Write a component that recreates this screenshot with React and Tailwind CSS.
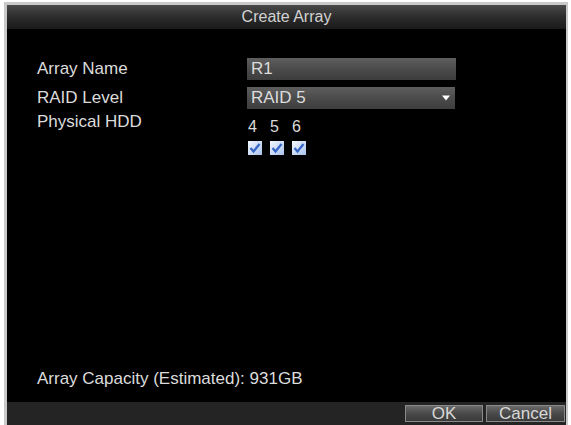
import React from 'react';

const labelCls = "text-[17px] leading-[20px] text-[#dcdcdc]";

const CheckBox = () => (
  <svg width="14" height="14" viewBox="0 0 14 14">
    <defs>
      <linearGradient id="cbg" x1="0" y1="0" x2="1" y2="1">
        <stop offset="0" stopColor="#f4f8ff" />
        <stop offset="1" stopColor="#a9c2ec" />
      </linearGradient>
    </defs>
    <rect x="0" y="0" width="14" height="14" fill="url(#cbg)" />
    <path d="M2.5 7 L5.5 10.5 L11.5 3" fill="none" stroke="#3566c6" strokeWidth="2.2" />
  </svg>
);

const App = () => {
  return (
    <div className="w-[571px] h-[425px] bg-white pt-[2px] pl-[4px] overflow-hidden font-['Liberation_Sans',Arial,sans-serif]">
      <div className="w-[564px] h-[425px] border-l-[3px] border-t-[3px] border-r-[2px] border-[#c9c9c9] bg-black flex flex-col">
        {/* title bar */}
        <div className="h-[24px] shrink-0 bg-gradient-to-b from-[#4a4a4a] via-[#2c2c2c] to-[#1a1a1a] flex items-center justify-center">
          <span className="text-[16px] leading-[20px] text-[#d2d2d2]">Create Array</span>
        </div>

        {/* body */}
        <div className="flex-1 flex flex-col pl-[30px] pt-[29px] pb-[13px]">
          <div className="flex items-center h-[22px]">
            <div className={`w-[210px] ${labelCls}`}>Array Name</div>
            <div className="w-[209px] h-[22px] bg-gradient-to-b from-[#5e5e5e] via-[#4b4b4b] to-[#3d3d3d] pl-[4px] flex items-center">
              <span className={labelCls}>R1</span>
            </div>
          </div>
          <div className="flex items-center h-[22px] mt-[7px]">
            <div className={`w-[210px] ${labelCls}`}>RAID Level</div>
            <div className="w-[208px] h-[22px] bg-gradient-to-b from-[#5e5e5e] via-[#4b4b4b] to-[#3d3d3d] pl-[4px] pr-[4px] flex items-center justify-between">
              <span className={labelCls}>RAID 5</span>
              <svg width="10" height="8" viewBox="0 0 10 8">
                <path d="M1 1.5 L9 1.5 L5 6.5 Z" fill="#ffffff" />
              </svg>
            </div>
          </div>
          <div className="flex mt-[3px]">
            <div className={`w-[210px] ${labelCls}`}>Physical HDD</div>
            <div className="flex flex-col mt-[6px] pl-[1px]">
              <div className="flex gap-[8px] text-[16px] leading-[18px] text-[#dadada]">
                <span className="w-[14px]">4</span>
                <span className="w-[14px]">5</span>
                <span className="w-[14px]">6</span>
              </div>
              <div className="flex gap-[8px] mt-[5px]">
                <CheckBox />
                <CheckBox />
                <CheckBox />
              </div>
            </div>
          </div>
          <div className="flex-1" />
          <div className={labelCls}>Array Capacity (Estimated): 931GB</div>
        </div>

        {/* bottom bar */}
        <div className="h-[25px] shrink-0 bg-[#242424] flex items-start justify-end pt-[3px] pr-[1px] gap-[3px]">
          <button className="w-[78px] h-[17px] border border-[#8a8a8a] bg-gradient-to-b from-[#6a6a6a] via-[#4a4a4a] to-[#3a3a3a] flex items-center justify-center text-[17px] leading-[17px] text-[#d8d8d8]">OK</button>
          <button className="w-[79px] h-[17px] border border-[#8a8a8a] bg-gradient-to-b from-[#6a6a6a] via-[#4a4a4a] to-[#3a3a3a] flex items-center justify-center text-[17px] leading-[17px] text-[#d8d8d8] overflow-hidden">Cancel</button>
        </div>
      </div>
    </div>
  );
};

export default App;
